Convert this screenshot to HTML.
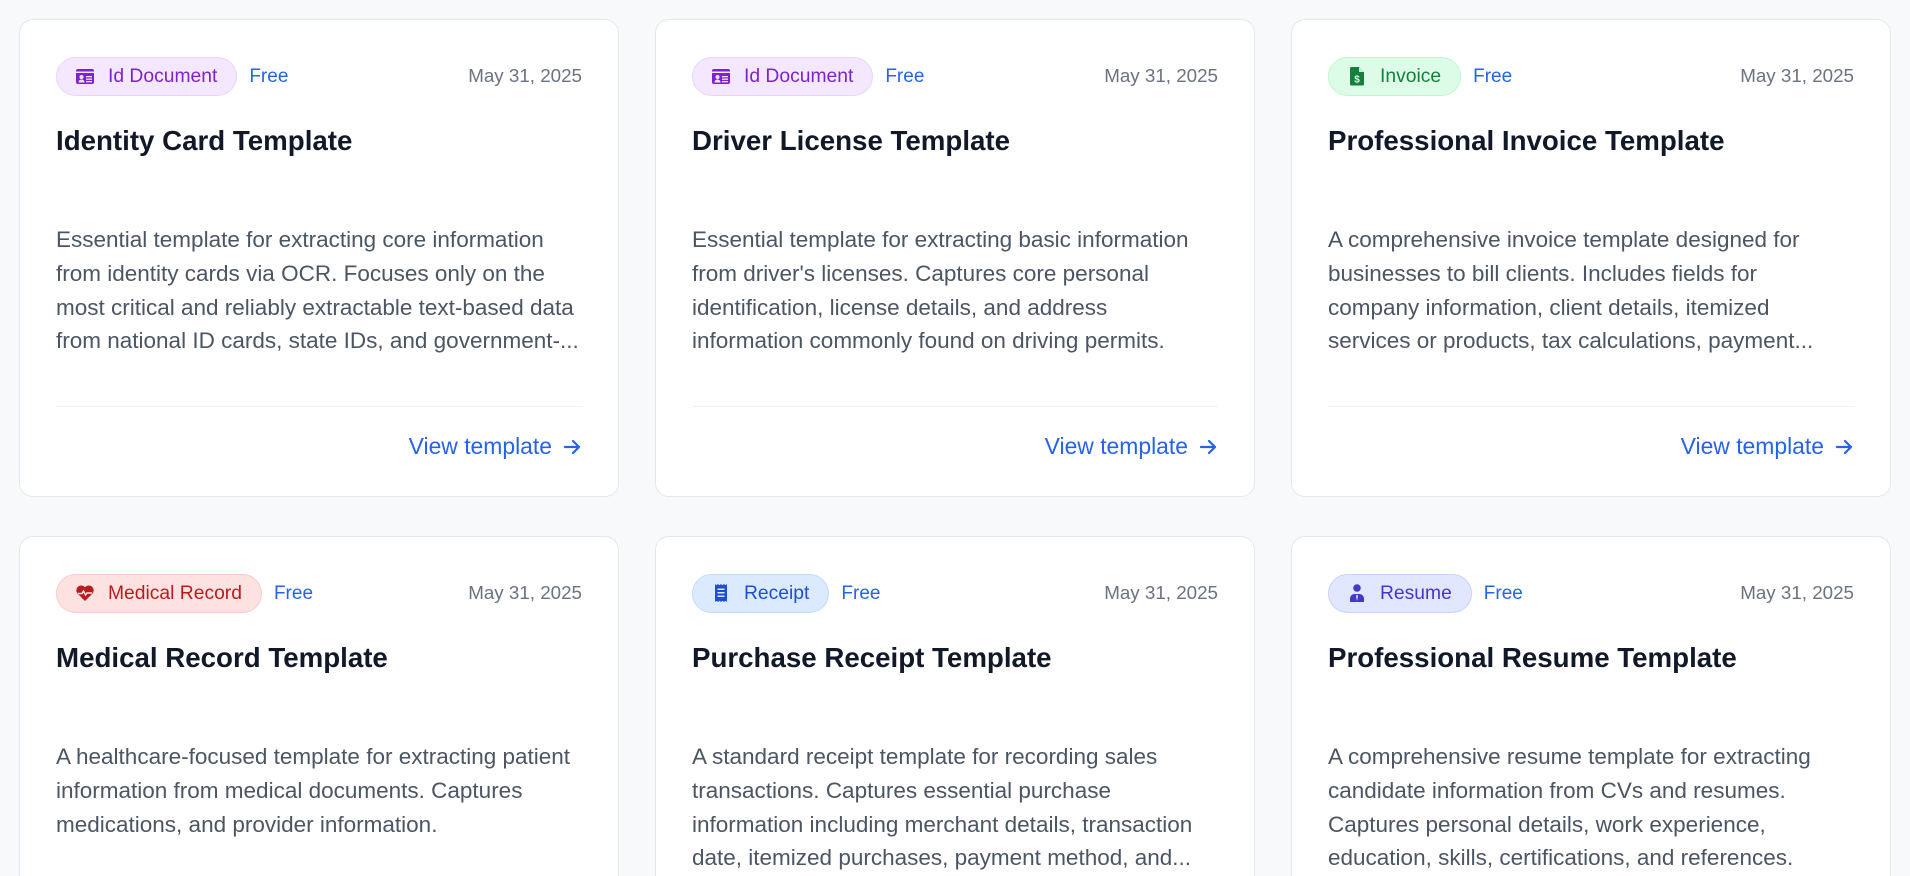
<!DOCTYPE html>
<html><head><meta charset="utf-8"><style>
*{box-sizing:border-box;margin:0;padding:0}
html,body{width:1910px;height:876px;overflow:hidden;background:#f8f9fb;font-family:"Liberation Sans",sans-serif}
#wrap{position:relative;width:1910px;height:876px;overflow:hidden}
.card{position:absolute;width:600px;height:478px;background:#fff;border:1.5px solid #e5e7eb;border-radius:14px}
.top{position:absolute;left:36px;right:36px;top:36px;height:40px;display:flex;align-items:center}
.badge{height:39px;border-radius:20px;border:1.5px solid;display:flex;align-items:center;padding:2px 19px 0 18px;font-size:19.3px;gap:13px;line-height:1}
.badge svg{width:20px;height:20px;margin-top:-2px}
.free{color:#2563eb;font-size:19px;margin-left:12px;padding-top:1px}
.date{margin-left:auto;color:#6b7280;font-size:18.8px}
.title{position:absolute;left:36px;top:105px;font-size:27.7px;font-weight:bold;color:#111827}
.desc{position:absolute;left:36px;top:203px;font-size:22.5px;line-height:33.8px;color:#4b5563;white-space:nowrap}
.hr{position:absolute;left:36px;right:36px;top:386px;border-top:1.5px solid #f0f1f3}
.view{position:absolute;right:36px;top:413px;color:#2563eb;font-size:22.9px;display:flex;align-items:center;gap:10px}
.purple{background:#f3e8ff;border-color:#e9d5ff;color:#7e22ce}
.green{background:#dcfce7;border-color:#bbf7d0;color:#15803d}
.red{background:#fee2e2;border-color:#fecaca;color:#b91c1c}
.blue{background:#dbeafe;border-color:#bfdbfe;color:#1d4ed8}
.indigo{background:#e0e7ff;border-color:#c7d2fe;color:#4338ca}
</style></head><body><div id="wrap">

<div class="card" style="left:19px;top:19px">
 <div class="top"><span class="badge purple"><svg viewBox="0 0 20 20"><rect x="1" y="3" width="18" height="15" rx="2" fill="currentColor"/><rect x="1" y="5.5" width="18" height="1.5" fill="#f3e8ff"/><circle cx="6.5" cy="11" r="2" fill="#f3e8ff"/><path d="M3.5 16.5c0-2 1.5-3 3-3s3 1 3 3z" fill="#f3e8ff"/><rect x="11" y="10" width="6" height="1.3" fill="#f3e8ff"/><rect x="11" y="12.5" width="6" height="1.3" fill="#f3e8ff"/><rect x="11" y="15" width="6" height="1.3" fill="#f3e8ff"/></svg>Id Document</span><span class="free">Free</span><span class="date">May 31, 2025</span></div>
 <div class="title">Identity Card Template</div>
 <div class="desc">Essential template for extracting core information<br>from identity cards via OCR. Focuses only on the<br>most critical and reliably extractable text-based data<br>from national ID cards, state IDs, and government-...</div>
 <div class="hr"></div>
 <div class="view">View template <svg width="20" height="20" viewBox="0 0 20 20" fill="none" stroke="currentColor" stroke-width="2.2" stroke-linecap="round" stroke-linejoin="round"><path d="M3 10h14M11 4l6 6-6 6"/></svg></div>
</div>

<div class="card" style="left:655px;top:19px">
 <div class="top"><span class="badge purple"><svg viewBox="0 0 20 20"><rect x="1" y="3" width="18" height="15" rx="2" fill="currentColor"/><rect x="1" y="5.5" width="18" height="1.5" fill="#f3e8ff"/><circle cx="6.5" cy="11" r="2" fill="#f3e8ff"/><path d="M3.5 16.5c0-2 1.5-3 3-3s3 1 3 3z" fill="#f3e8ff"/><rect x="11" y="10" width="6" height="1.3" fill="#f3e8ff"/><rect x="11" y="12.5" width="6" height="1.3" fill="#f3e8ff"/><rect x="11" y="15" width="6" height="1.3" fill="#f3e8ff"/></svg>Id Document</span><span class="free">Free</span><span class="date">May 31, 2025</span></div>
 <div class="title">Driver License Template</div>
 <div class="desc">Essential template for extracting basic information<br>from driver's licenses. Captures core personal<br>identification, license details, and address<br>information commonly found on driving permits.</div>
 <div class="hr"></div>
 <div class="view">View template <svg width="20" height="20" viewBox="0 0 20 20" fill="none" stroke="currentColor" stroke-width="2.2" stroke-linecap="round" stroke-linejoin="round"><path d="M3 10h14M11 4l6 6-6 6"/></svg></div>
</div>

<div class="card" style="left:1291px;top:19px">
 <div class="top"><span class="badge green"><svg viewBox="0 0 20 20"><path d="M4 1h8l5 5v12a1.5 1.5 0 0 1-1.5 1.5h-11A1.5 1.5 0 0 1 3 18V2.5A1.5 1.5 0 0 1 4 1z" fill="currentColor"/><path d="M12 1v5h5" fill="#bbf7d0"/><text x="10" y="16.5" font-size="10" font-weight="bold" text-anchor="middle" fill="#dcfce7" font-family="Liberation Sans">$</text></svg>Invoice</span><span class="free">Free</span><span class="date">May 31, 2025</span></div>
 <div class="title">Professional Invoice Template</div>
 <div class="desc">A comprehensive invoice template designed for<br>businesses to bill clients. Includes fields for<br>company information, client details, itemized<br>services or products, tax calculations, payment...</div>
 <div class="hr"></div>
 <div class="view">View template <svg width="20" height="20" viewBox="0 0 20 20" fill="none" stroke="currentColor" stroke-width="2.2" stroke-linecap="round" stroke-linejoin="round"><path d="M3 10h14M11 4l6 6-6 6"/></svg></div>
</div>

<div class="card" style="left:19px;top:536px">
 <div class="top"><span class="badge red"><svg viewBox="0 0 20 20"><path d="M10 18L2.5 10.5A4.6 4.6 0 0 1 10 4.2a4.6 4.6 0 0 1 7.5 6.3z" fill="currentColor"/><path d="M3 10.5h4l1.5-2.5 2 4 1.5-2h5" fill="none" stroke="#fee2e2" stroke-width="1.5"/></svg>Medical Record</span><span class="free">Free</span><span class="date">May 31, 2025</span></div>
 <div class="title">Medical Record Template</div>
 <div class="desc">A healthcare-focused template for extracting patient<br>information from medical documents. Captures<br>medications, and provider information.</div>
</div>

<div class="card" style="left:655px;top:536px">
 <div class="top"><span class="badge blue"><svg viewBox="0 0 20 20"><path d="M4 1l1.5 1.2L7 1l1.5 1.2L10 1l1.5 1.2L13 1l1.5 1.2L16 1v18l-1.5-1.2L13 19l-1.5-1.2L10 19l-1.5-1.2L7 19l-1.5-1.2L4 19z" fill="currentColor"/><rect x="6.5" y="5.5" width="7" height="1.5" fill="#dbeafe"/><rect x="6.5" y="9" width="7" height="1.5" fill="#dbeafe"/><rect x="6.5" y="12.5" width="7" height="1.5" fill="#dbeafe"/></svg>Receipt</span><span class="free">Free</span><span class="date">May 31, 2025</span></div>
 <div class="title">Purchase Receipt Template</div>
 <div class="desc">A standard receipt template for recording sales<br>transactions. Captures essential purchase<br>information including merchant details, transaction<br>date, itemized purchases, payment method, and...</div>
</div>

<div class="card" style="left:1291px;top:536px">
 <div class="top"><span class="badge indigo"><svg viewBox="0 0 20 20"><circle cx="10" cy="5" r="3.8" fill="currentColor"/><path d="M3 19v-3.5A4.5 4.5 0 0 1 7.5 11h5a4.5 4.5 0 0 1 4.5 4.5V19z" fill="currentColor"/><path d="M10 11.5l-1 1.5 1 5 1-5z" fill="#e0e7ff"/></svg>Resume</span><span class="free">Free</span><span class="date">May 31, 2025</span></div>
 <div class="title">Professional Resume Template</div>
 <div class="desc">A comprehensive resume template for extracting<br>candidate information from CVs and resumes.<br>Captures personal details, work experience,<br>education, skills, certifications, and references.</div>
</div>

</div></body></html>
